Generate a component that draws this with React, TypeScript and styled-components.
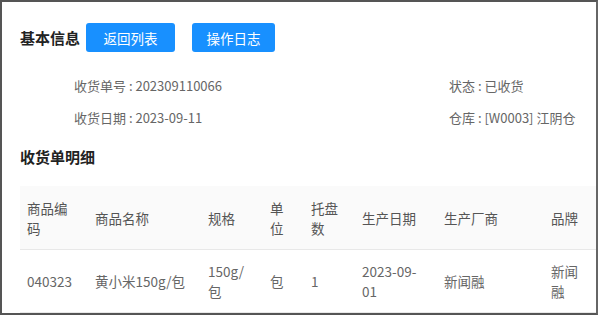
import styled, { createGlobalStyle } from "styled-components";

const GlobalStyle = createGlobalStyle`
  html, body {
    margin: 0;
    padding: 0;
    background: #ffffff;
  }
  body {
    font-family: "Noto Sans CJK SC", "Open Sans", sans-serif;
  }
`;

const Frame = styled.div`
  box-sizing: border-box;
  width: 598px;
  height: 315px;
  border: 2px solid #555;
  border-right-color: #666;
  padding: 21px 0 0 18px;
  overflow: hidden;
`;

const TitleRow = styled.div`
  display: flex;
  align-items: center;
  height: 29px;
`;

const SectionTitle = styled.h2`
  margin: 0;
  font-size: 15px;
  line-height: 22px;
  font-weight: 700;
  color: #222;
`;

const Button = styled.button<{ $pad: number }>`
  height: 29px;
  margin-left: ${(p) => (p.$pad > 16 ? 6 : 17)}px;
  padding: 0 ${(p) => p.$pad}px;
  border: none;
  border-radius: 3px;
  background: #1890ff;
  color: #fff;
  font-family: inherit;
  font-size: 13.5px;
  cursor: pointer;
`;

const InfoGrid = styled.div`
  display: grid;
  grid-template-columns: 375px auto;
  row-gap: 12px;
  margin: 24px 0 0 54px;
  font-size: 13px;
  line-height: 20px;
  color: #666;
`;

const DetailTitle = styled(SectionTitle)`
  margin-top: 18px;
`;

const TableWrap = styled.div`
  margin-top: 18px;
`;

const Table = styled.table`
  width: 578px;
  table-layout: fixed;
  border-collapse: collapse;
  font-size: 13.5px;
  line-height: 20px;
`;

const Th = styled.th`
  background: #fafafa;
  color: #555;
  font-weight: 400;
  text-align: left;
  padding: 12px 8px 11px 7px;
  border-bottom: 1px solid #e8e8e8;
`;

const Td = styled.td`
  color: #666;
  padding: 11px 8px 11px 7px;
  border-bottom: 1px solid #e8e8e8;
`;

const columns = [
  { title: "商品编码", w: 68 },
  { title: "商品名称", w: 113 },
  { title: "规格", w: 62 },
  { title: "单位", w: 41 },
  { title: "托盘数", w: 51 },
  { title: "生产日期", w: 82 },
  { title: "生产厂商", w: 107 },
  { title: "品牌", w: 54 },
];

const row = ["040323", "黄小米150g/包", "150g/包", "包", "1", "2023-09-01", "新闻融", "新闻融"];

export default function App() {
  return (
    <>
      <GlobalStyle />
      <Frame>
        <TitleRow>
          <SectionTitle>基本信息</SectionTitle>
          <Button $pad={17.5}>返回列表</Button>
          <Button $pad={14.5}>操作日志</Button>
        </TitleRow>
        <InfoGrid>
          <span>收货单号 : 202309110066</span>
          <span>状态 : 已收货</span>
          <span>收货日期 : 2023-09-11</span>
          <span>仓库 : [W0003] 江阴仓</span>
        </InfoGrid>
        <DetailTitle>收货单明细</DetailTitle>
        <TableWrap>
          <Table>
            <colgroup>
              {columns.map((c) => (
                <col key={c.title} style={{ width: c.w }} />
              ))}
            </colgroup>
            <thead>
              <tr>
                {columns.map((c) => (
                  <Th key={c.title}>{c.title}</Th>
                ))}
              </tr>
            </thead>
            <tbody>
              <tr>
                {row.map((v, i) => (
                  <Td key={i}>{v}</Td>
                ))}
              </tr>
            </tbody>
          </Table>
        </TableWrap>
      </Frame>
    </>
  );
}
